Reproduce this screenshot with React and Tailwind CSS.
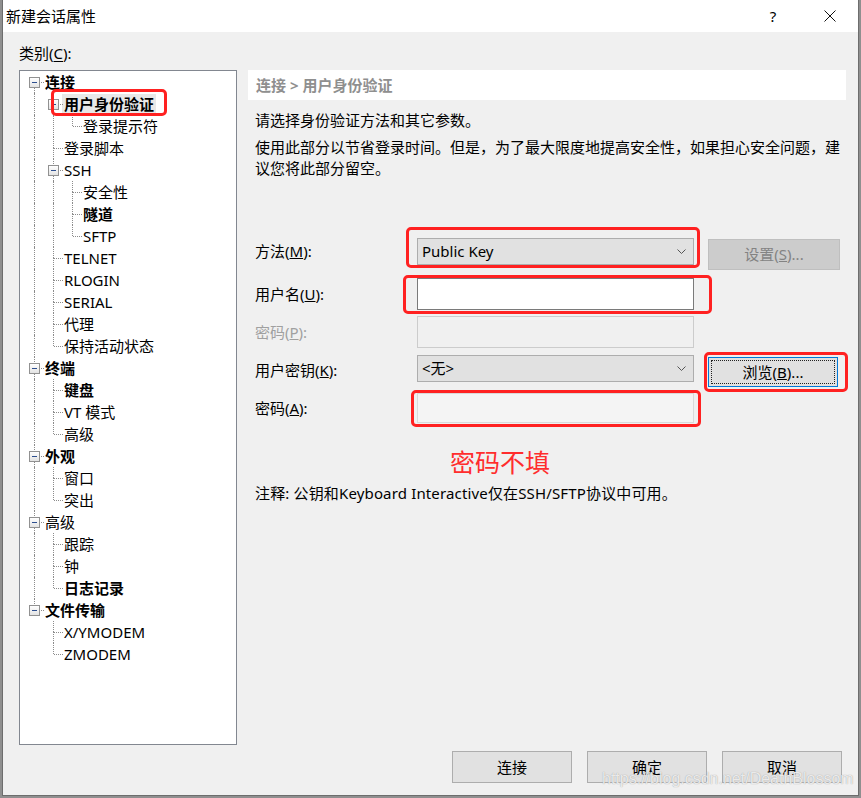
import React from "react";

const FONT = "font-['Noto_Sans','Noto_Sans_CJK_SC',sans-serif]";

const items = [
  { t: "连接", l: 0, e: true, b: true },
  { t: "用户身份验证", l: 1, e: true, b: true, sel: true },
  { t: "登录提示符", l: 2 },
  { t: "登录脚本", l: 1 },
  { t: "SSH", l: 1, e: true },
  { t: "安全性", l: 2 },
  { t: "隧道", l: 2, b: true },
  { t: "SFTP", l: 2 },
  { t: "TELNET", l: 1 },
  { t: "RLOGIN", l: 1 },
  { t: "SERIAL", l: 1 },
  { t: "代理", l: 1 },
  { t: "保持活动状态", l: 1 },
  { t: "终端", l: 0, e: true, b: true },
  { t: "键盘", l: 1, b: true },
  { t: "VT 模式", l: 1 },
  { t: "高级", l: 1 },
  { t: "外观", l: 0, e: true, b: true },
  { t: "窗口", l: 1 },
  { t: "突出", l: 1 },
  { t: "高级", l: 0, e: true },
  { t: "跟踪", l: 1 },
  { t: "钟", l: 1 },
  { t: "日志记录", l: 1, b: true },
  { t: "文件传输", l: 0, e: true, b: true },
  { t: "X/YMODEM", l: 1 },
  { t: "ZMODEM", l: 1 },
];

function hasNext(i) {
  const L = items[i].l;
  for (let j = i + 1; j < items.length; j++) {
    if (items[j].l < L) return false;
    if (items[j].l === L) return true;
  }
  return false;
}

const rows = (() => {
  const stack = [];
  return items.map((it, i) => {
    stack[it.l] = i;
    const anc = [];
    for (let k = 0; k < it.l; k++) anc.push(hasNext(stack[k]));
    return { ...it, anc, next: hasNext(i), first: i === 0 };
  });
})();

const dot = "absolute border-dotted border-[#8c8c8c]";

function TreeRow({ r }) {
  return (
    <div className="flex h-[22px] items-center pl-[5px]">
      {r.anc.map((a, k) => (
        <div key={k} className="relative h-full w-[19px] shrink-0">
          {a && <span className={`${dot} left-[9px] top-0 h-[22px] border-l`} />}
        </div>
      ))}
      <div className="relative h-full w-[20px] shrink-0">
        {!r.first && <span className={`${dot} left-[9px] top-0 h-[11px] border-l`} />}
        {r.next && <span className={`${dot} left-[9px] top-[11px] h-[11px] border-l`} />}
        <span className={`${dot} left-[10px] top-[11px] w-[9px] border-t`} />
        {r.e && (
          <span className="absolute left-[4px] top-[6px] h-[11px] w-[11px] border border-[#919191] bg-gradient-to-b from-white to-[#e3e3e3]">
            <span className="absolute left-[2px] top-[4px] h-[1px] w-[5px] bg-[#2e4f8f]" />
          </span>
        )}
      </div>
      <span
        className={`whitespace-nowrap text-[15px] leading-[20px] ${r.b ? "font-bold" : ""} ${
          r.sel ? "-ml-[2px] bg-[#e8e8e8] px-[2px]" : ""
        }`}
      >
        {r.t}
      </span>
    </div>
  );
}

function Chevron() {
  return (
    <svg width="9" height="5" viewBox="0 0 9 5" className="shrink-0">
      <path d="M0.5 0.5 L4.5 4.5 L8.5 0.5" fill="none" stroke="#555" strokeWidth="1" />
    </svg>
  );
}

function Combo({ text }) {
  return (
    <div className="flex h-[27px] w-[277px] shrink-0 items-center justify-between border border-[#adadad] bg-[#e1e1e1] pl-[4px] pr-[7px] text-[15px]">
      <span>{text}</span>
      <Chevron />
    </div>
  );
}

function Red({ className }) {
  return <div className={`pointer-events-none absolute rounded-[5px] border-[3px] border-[#ff2121] ${className}`} />;
}

export default function App() {
  return (
    <div className={`relative h-[798px] w-[861px] overflow-hidden bg-[#8f8f8f] text-black ${FONT}`}>
      <div className="ml-[2px] flex h-[796px] w-[857px] flex-col border-x border-b border-[#6d6d6d] bg-[#f0f0f0]">
        {/* title bar */}
        <div className="flex h-[32px] shrink-0 items-center bg-white">
          <span className="pl-[3px] text-[15px] leading-[20px]">新建会话属性</span>
          <div className="ml-auto flex pr-[5px]">
            <div className="flex h-[32px] w-[68px] items-center justify-center text-[15px]">?</div>
            <div className="flex h-[32px] w-[46px] items-center justify-center">
              <svg width="12" height="12" viewBox="0 0 12 12">
                <path d="M0.5 0.5 L11.5 11.5 M11.5 0.5 L0.5 11.5" stroke="#111" strokeWidth="1" />
              </svg>
            </div>
          </div>
        </div>

        {/* body */}
        <div className="flex flex-1 flex-col">
          <div className="pl-[16px] pt-[11px] text-[15px] leading-[20px]">
            类别(<u className="underline-offset-2">C</u>):
          </div>
          <div className="mt-[7px] flex pl-[16px]">
            {/* tree */}
            <div className="h-[675px] w-[218px] shrink-0 border border-[#828790] bg-white">
              {rows.map((r, i) => (
                <TreeRow key={i} r={r} />
              ))}
            </div>

            {/* right panel */}
            <div className="ml-[11px] flex w-[598px] flex-col">
              <div className="flex h-[30px] items-center bg-white pl-[8px] text-[15px] font-bold text-[#8f8f8f]">
                连接 &gt; 用户身份验证
              </div>
              <div className="mt-[10px] pl-[7px] text-[15px] leading-[21px]">请选择身份验证方法和其它参数。</div>
              <div className="mt-[6px] pl-[7px] text-[15px] leading-[21px]">
                使用此部分以节省登录时间。但是，为了最大限度地提高安全性，如果担心安全问题，建
                <br />
                议您将此部分留空。
              </div>

              {/* row A */}
              <div className="mt-[59px] flex h-[33px] items-start text-[15px]">
                <div className="w-[169px] shrink-0 pl-[7px] leading-[27px]">
                  方法(<u>M</u>):
                </div>
                <Combo text="Public Key" />
                <div className="ml-[14px] mt-[1px] flex h-[31px] w-[132px] items-center justify-center border border-[#bfbfbf] bg-[#cccccc] text-[#838383]">
                  设置(<u>S</u>)...
                </div>
              </div>

              {/* row B */}
              <div className="mt-[7px] flex h-[32px] items-start text-[15px]">
                <div className="w-[169px] shrink-0 pl-[7px] leading-[32px]">
                  用户名(<u>U</u>):
                </div>
                <div className="h-[32px] w-[277px] border border-[#7a7a7a] bg-white" />
              </div>

              {/* row C */}
              <div className="mt-[6px] flex h-[32px] items-start text-[15px]">
                <div className="w-[169px] shrink-0 pl-[7px] leading-[32px] text-[#a0a0a0]">
                  密码(<u>P</u>):
                </div>
                <div className="h-[32px] w-[277px] border border-[#cccccc] bg-[#f0f0f0]" />
              </div>

              {/* row D */}
              <div className="mt-[7px] flex h-[32px] items-start text-[15px]">
                <div className="w-[169px] shrink-0 pl-[7px] leading-[30px]">
                  用户密钥(<u>K</u>):
                </div>
                <Combo text="<无>" />
                <div className="relative ml-[14px] mt-[2px] flex h-[30px] w-[130px] items-center justify-center border border-[#0078d7] bg-[#e1e1e1]">
                  <span className="pointer-events-none absolute inset-[2px] border border-dotted border-[#222]" />
                  浏览(<u>B</u>)...
                </div>
              </div>

              {/* row E */}
              <div className="mt-[6px] flex h-[30px] items-start text-[15px]">
                <div className="w-[169px] shrink-0 pl-[7px] leading-[30px]">
                  密码(<u>A</u>):
                </div>
                <div className="h-[30px] w-[277px] border border-[#d9d9d9] bg-[#f4f4f4]" />
              </div>

              <div className="mt-[23px] pl-[202px] text-[25px] leading-[32px] text-[#ff2d2d]">密码不填</div>

              <div className="mt-[5px] pl-[7px] text-[15px] leading-[21px] tracking-[0.15px]">
                注释: 公钥和Keyboard Interactive仅在SSH/SFTP协议中可用。
              </div>
            </div>
          </div>

          {/* buttons */}
          <div className="mt-[6px] flex justify-end gap-[15px] pr-[16px] text-[15px]">
            {["连接", "确定", "取消"].map((t) => (
              <div
                key={t}
                className="flex h-[32px] w-[120px] items-center justify-center border border-[#adadad] bg-[#e1e1e1]"
              >
                {t}
              </div>
            ))}
          </div>
        </div>
      </div>

      {/* annotations */}
      <Red className="left-[51px] top-[89px] h-[27px] w-[116px]" />
      <Red className="left-[406px] top-[227px] h-[41px] w-[294px]" />
      <Red className="left-[403px] top-[275px] h-[39px] w-[309px]" />
      <Red className="left-[704px] top-[352px] h-[40px] w-[144px]" />
      <Red className="left-[411px] top-[390px] h-[37px] w-[290px]" />

      {/* watermark */}
      <div className="pointer-events-none absolute left-[602px] top-[767px] font-['Liberation_Sans',sans-serif] text-[16px] leading-[24px] text-white/80 [text-shadow:0_0_1px_#8a8a8a]">
        https://blog.csdn.net/DeathBlossom
      </div>
    </div>
  );
}
